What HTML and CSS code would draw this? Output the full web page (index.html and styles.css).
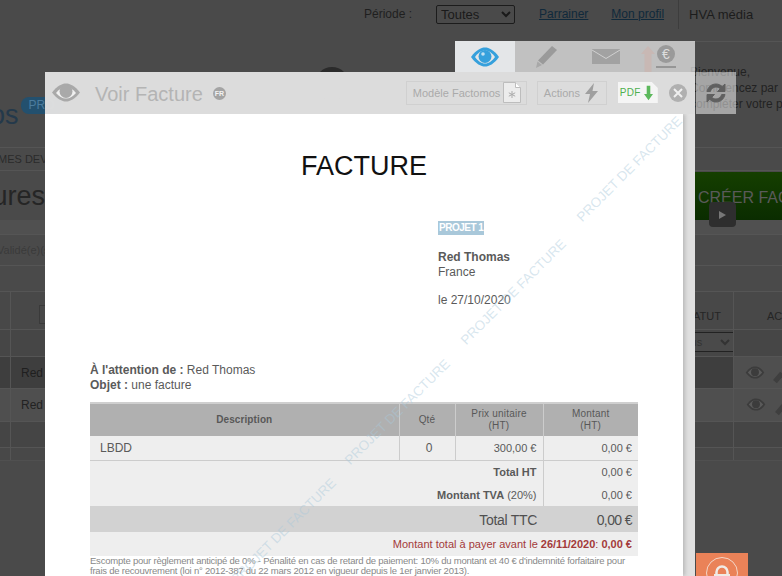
FILE: index.html
```html
<!DOCTYPE html>
<html lang="fr">
<head>
  <meta charset="UTF-8" />
  <title>Voir Facture</title>
  <link rel="stylesheet" href="styles.css">
</head>
<body>

  <!-- page behind the overlay -->
  <div class="page">
    <div class="topbar">
      <span class="period">Période :</span>
      <select class="period-select"><option>Toutes</option></select>
      <a class="toplink first" href="#">Parrainer</a>
      <a class="toplink" href="#">Mon profil</a>
      <span class="company">HVA média</span>
    </div>

    <div class="intro">
      <div class="logo"><span class="logo-name">Factomos</span><span class="logo-pro">PRO</span></div>
      <div class="avatar"></div>
      <div class="welcome">Bienvenue,<br>Commencez par<br>compléter votre profil</div>
    </div>

    <div class="nav">MES DEVIS</div>

    <div class="title-row">
      <span class="page-title">Factures</span>
      <div class="create-btn">CRÉER FACTURE</div>
    </div>

    <div class="filter-gap"></div>
    <div class="filter-line">Validé(e)(s)</div>
    <div class="filter-after"></div>

    <div class="bgrow bgrow-head">
      <div class="c-a"></div><div class="c-b"><span class="mini-input"></span></div>
      <div class="c-s">STATUT</div><div class="c-x">ACTIONS</div>
    </div>
    <div class="bgrow bgrow-filter">
      <div class="c-a"></div><div class="c-b"></div>
      <div class="c-s"><select class="statut-select"><option>Tous</option></select></div><div class="c-x"></div>
    </div>
    <div class="bgrow bgrow-one">
      <div class="c-a"></div><div class="c-b">Red Thomas</div>
      <div class="c-s"></div>
      <div class="c-x">
        <svg class="dim-eye" viewBox="0 0 28 18"><path d="M1 9C6 2 10 .5 14 .5S22 2 27 9c-5 7-9 8.500-13 8.500S6 16 1 9z" fill="#3c3c3c"/><path d="M4 9c3-4 6-6 10-6s7 2 10 6c-3 4-6 6-10 6S7 13 4 9z" fill="#5a5a5a"/><circle cx="14" cy="8.500" r="5.500" fill="#3c3c3c"/></svg>
        <span class="dim-pencil"></span>
      </div>
    </div>
    <div class="bgrow bgrow-two">
      <div class="c-a"></div><div class="c-b">Red Thomas</div>
      <div class="c-s"></div>
      <div class="c-x">
        <svg class="dim-eye" viewBox="0 0 28 18"><path d="M1 9C6 2 10 .5 14 .5S22 2 27 9c-5 7-9 8.500-13 8.500S6 16 1 9z" fill="#3c3c3c"/><path d="M4 9c3-4 6-6 10-6s7 2 10 6c-3 4-6 6-10 6S7 13 4 9z" fill="#5a5a5a"/><circle cx="14" cy="8.500" r="5.500" fill="#3c3c3c"/></svg>
        <span class="dim-pencil"></span>
      </div>
    </div>
    <div class="bgrow bgrow-foot"><div class="c-a"></div><div class="c-b"></div><div class="c-s"></div><div class="c-x"></div></div>
    <div class="bgrow bgrow-foot2"><div class="c-a"></div><div class="c-b"></div><div class="c-s"></div><div class="c-x"></div></div>
  </div>

  <div class="play"><span class="play-arrow"></span></div>

  <div class="lock">
    <svg viewBox="0 0 52 23" width="52" height="23">
      <circle cx="26" cy="20" r="15.500" fill="none" stroke="#f3d6c8" stroke-width="1"/>
      <path d="M20.500 23v-4a5.500 5.500 0 0 1 11 0v4" fill="none" stroke="#f0ebe6" stroke-width="2.500"/>
      <rect x="18" y="21" width="16" height="2" fill="#f0ebe6"/>
    </svg>
  </div>

  <!-- tabs above the modal -->
  <div class="tabs">
    <div class="tab tab-on">
      <svg width="28" height="20" viewBox="0 0 28 20"><path d="M0 10C5 3 10 .5 14 .5S23 3 28 10c-5 7-10 9.500-14 9.500S5 17 0 10z" fill="#35a0dc"/><path d="M4 10c3-4 6-6.500 10-6.500S21 6 24 10c-3 4-6 6.500-10 6.500S7 14 4 10z" fill="#e4e6e8"/><circle cx="14" cy="9.500" r="6.500" fill="#35a0dc"/><circle cx="12" cy="7" r="1.800" fill="#bfe0f3"/></svg>
    </div>
    <div class="tab">
      <svg width="21" height="22" viewBox="0 0 21 22"><path d="M16 0l5 4L7 18.500 2 14.500z" fill="#9a9a9a"/><path d="M1.500 15.500l4.500 3.500L0 22z" fill="#a8a8a8"/></svg>
    </div>
    <div class="tab">
      <svg width="28" height="15" viewBox="0 0 28 15"><rect width="28" height="15" fill="#a2a2a2"/><path d="M0 1l14 8.500L28 1" fill="none" stroke="#d0d0d0" stroke-width="1"/></svg>
    </div>
    <div class="tab tab-money">
      <svg class="up-arrow" width="14" height="26" viewBox="0 0 14 26"><path d="M7 0l7 8h-3.500v18h-7V8H0z" fill="#c8b8b4"/></svg>
      <div class="coin-wrap"><span class="coin">€</span><span class="coin-bar"></span></div>
    </div>
  </div>

  <div class="refresh">
    <svg width="22" height="22" viewBox="0 0 22 22"><path d="M2 9.500C3 5 6.500 2 11 2c2.500 0 4.600 1 6.200 2.600L20 2v7.500h-7.500l2.700-2.700C14 5.600 12.600 5 11 5 8.300 5 6.100 6.800 5.300 9.500z" fill="#606060" stroke="#606060"/><path d="M20 12.500C19 17 15.500 20 11 20c-2.500 0-4.600-1-6.200-2.600L2 20v-7.500h7.500l-2.700 2.700C8 16.400 9.400 17 11 17c2.700 0 4.900-1.800 5.700-4.500z" fill="#606060" stroke="#606060"/></svg>
  </div>

  <div class="modal">
    <div class="modal-head">
      <svg class="head-eye" width="28" height="19" viewBox="0 0 28 19"><path d="M0 9.500C5 3 10 .5 14 .5S23 3 28 9.500c-5 6.500-10 9-14 9S5 16 0 9.500z" fill="#a9a9a9"/><path d="M4 10c3-3.500 6-6 10-6s7 2.500 10 6c-3 3.500-6 5.500-10 5.500S7 13.500 4 10z" fill="#f0f0f0"/><circle cx="14" cy="8.500" r="6.500" fill="#a9a9a9"/></svg>
      <span class="head-title">Voir Facture</span>
      <span class="lang">FR</span>
      <div class="head-btn btn-model">Modèle Factomos
        <svg width="18" height="21" viewBox="0 0 18 21"><path d="M.5.5h12l5 5v15H.5z" fill="#ececec" stroke="#bdbdbd"/><path d="M12.500.5v5h5" fill="#fff" stroke="#bdbdbd"/><path d="M9 9v7M5.800 10.800l6.400 3.400M12.200 10.800l-6.400 3.400" stroke="#aaa" fill="none"/></svg>
      </div>
      <div class="head-btn btn-actions">Actions
        <svg width="13" height="20" viewBox="0 0 13 20"><path d="M9 0L0 11h5L3 20l10-12H7.500z" fill="#9f9f9f"/></svg>
      </div>
      <div class="pdf">PDF
        <svg width="9" height="16" viewBox="0 0 10 16"><path d="M3 0h4v9h3l-5 7-5-7h3z" fill="#5cb85c"/></svg>
      </div>
      <div class="close">
        <svg width="18" height="18" viewBox="0 0 18 18"><circle cx="9" cy="9" r="9" fill="#b0b0b0"/><path d="M5 5l8 8M13 5l-8 8" stroke="#efefef" stroke-width="2"/></svg>
      </div>
    </div>

    <div class="paper-wrap">
      <div class="paper">
        <h1>FACTURE</h1>

        <div class="client">
          <span class="project-tag">PROJET 1</span>
          <p class="client-name"><b>Red Thomas</b><br>France</p>
          <p class="client-date">le 27/10/2020</p>
        </div>

        <p class="subject"><b>À l'attention de :</b> Red Thomas<br><b>Objet :</b> une facture</p>

        <table class="invoice">
          <colgroup><col class="col-desc"><col class="col-qty"><col class="col-unit"><col class="col-total"></colgroup>
          <thead>
            <tr><th>Description</th><th>Qté</th><th>Prix unitaire<br><span>(HT)</span></th><th>Montant<br><span>(HT)</span></th></tr>
          </thead>
          <tbody>
            <tr class="line">
              <td class="desc">LBDD</td><td class="mid">0</td><td class="num">300,00 €</td><td class="num">0,00 €</td>
            </tr>
            <tr class="sum sum-first"><td colspan="3" class="num"><b>Total HT</b></td><td class="num">0,00 €</td></tr>
            <tr class="sum"><td colspan="3" class="num"><b>Montant TVA</b> (20%)</td><td class="num">0,00 €</td></tr>
            <tr class="ttc"><td colspan="3" class="num">Total TTC</td><td class="num">0,00 €</td></tr>
            <tr class="due"><td colspan="4">Montant total à payer avant le <b>26/11/2020</b>: <b>0,00 €</b></td></tr>
          </tbody>
        </table>

        <p class="legal">Escompte pour règlement anticipé de 0% - Pénalité en cas de retard de paiement: 10% du montant et 40 € d'indemnité forfaitaire pour frais de recouvrement (loi n° 2012-387 du 22 mars 2012 en vigueur depuis le 1er janvier 2013).</p>

        <span class="wm wm-1">PROJET DE FACTURE</span>
        <span class="wm wm-2">PROJET DE FACTURE</span>
        <span class="wm wm-3">PROJET DE FACTURE</span>
        <span class="wm wm-4">PROJET DE FACTURE</span>
      </div>
    </div>
  </div>

</body>
</html>
```

FILE: styles.css
```css
* { box-sizing: border-box; margin: 0; }

html, body { height: 576px; overflow: hidden; }

body {
  position: relative;
  background: #4a4a4a;
  font-family: "Liberation Sans", Arial, sans-serif;
  font-size: 12px;
  color: #222;
}

/* background page */
.page { width: 782px; height: 576px; overflow: hidden; }

.topbar {
  height: 41px;
  display: flex;
  align-items: flex-start;
  padding-top: 5px;
  padding-left: 364px;
}
.period { font-size: 12px; line-height: 18px; color: #1f1f1f; width: 72px; }
.period-select {
  width: 79px;
  height: 19px;
  font-family: inherit;
  font-size: 13px;
  background: #4a4a4a;
  color: #1a1a1a;
  border: 1px solid #1c1c1c;
  border-radius: 2px;
  padding: 0;
}
.toplink { font-size: 12px; line-height: 18px; color: #10293b; margin-left: 23px; }
.toplink.first { margin-left: 24px; }
.company {
  margin-left: 14px;
  padding-left: 10px;
  height: 29px;
  margin-top: -5px;
  line-height: 30px;
  border-left: 1px solid #3d3d3d;
  font-size: 13px;
  color: #1c1c1c;
  white-space: nowrap;
}

.intro { height: 106px; display: flex; }
.logo { width: 52px; margin-top: 60px; position: relative; display: flex; overflow: visible; }
.logo-name {
  margin-left: -100px;
  font-size: 27px;
  line-height: 28px;
  color: #24394b;
  white-space: nowrap;
}
.logo-pro {
  margin-left: 2px;
  height: 17px;
  padding: 0 8px;
  margin-top: -4px;
  border-radius: 8px;
  background: #23506e;
  color: #4b7c9e;
  font-size: 12px;
  line-height: 17px;
}
.avatar {
  width: 34px;
  height: 34px;
  margin-top: 26px;
  margin-left: 263px;
  border-radius: 50%;
  background: #2b2b2b;
}
.welcome {
  margin-left: auto;
  width: 92px;
  padding: 23px 0 0 0;
  line-height: 16px;
  white-space: nowrap;
  overflow: hidden;
  color: #222;
  font-size: 12px;
  box-shadow: inset 0 1px 0 #555;
}

.nav {
  height: 24px;
  border-top: 1px solid #555;
  border-bottom: 1px solid #555;
  line-height: 22px;
  text-indent: -2px;
  color: #2a2a2a;
  font-size: 11px;
  white-space: nowrap;
}

.title-row { height: 49px; display: flex; justify-content: space-between; align-items: center; }
.page-title { font-size: 27px; margin-left: -60px; color: #252525; white-space: nowrap; margin-top: 2px; }
.create-btn {
  width: 87px;
  height: 48px;
  margin-top: 1px;
  padding-left: 3px;
  background: linear-gradient(#153f00, #0a2c00);
  color: #5a5a5a;
  font-size: 16px;
  line-height: 52px;
  white-space: nowrap;
  overflow: hidden;
}

.filter-gap { height: 15px; border-bottom: 1px solid #555; background: #505050; }
.filter-line { height: 31px; border-bottom: 1px solid #555; font-size: 11px; line-height: 31px; text-indent: -3px; color: #3a3a3a; white-space: nowrap; }
.filter-after { height: 25px; }

.bgrow { display: flex; border-top: 1px solid #555; }
.c-a { width: 11px; border-right: 1px solid #555; flex: none; }
.c-b { flex: 1; padding-left: 10px; color: #1f1f1f; white-space: nowrap; }
.c-s { width: 39px; flex: none; white-space: nowrap; overflow: hidden; text-align: right; border-right: 1px solid #555; }
.c-x { width: 48px; flex: none; white-space: nowrap; overflow: hidden; color: #222; }

.bgrow-head { height: 38px; background: #484848; }
.bgrow-head .c-s, .bgrow-head .c-x { padding-top: 18px; color: #252525; font-size: 11px; }
.bgrow-head .c-s { padding-right: 12px; display: flex; justify-content: flex-end; }
.bgrow-head .c-x { padding-left: 33px; }
.mini-input { display: block; width: 30px; height: 19px; margin: 13px 0 0 18px; border: 1px solid #3a3a3a; }
.bgrow-filter { height: 27px; background: #464646; }
.statut-select {
  width: 60px;
  height: 20px;
  margin: 2px 0 0 -21px;
  display: block;
  background: #4a4a4a;
  border: 1px solid #222;
  color: #333;
  font-size: 11px;
}
.bgrow-one { height: 32px; background: #3e3e3e; }
.bgrow-one .c-b { padding-top: 9px; }
.bgrow-one .c-x { background: #4f4f4f; padding: 9px 0 0 11px; display: flex; gap: 11px; }
.bgrow-two { height: 33px; background: #4f4f4f; }
.bgrow-two .c-b { padding-top: 9px; color: #222; }
.bgrow-two .c-x { padding: 9px 0 0 12px; display: flex; gap: 12px; }
.dim-eye { width: 20px; height: 13px; flex: none; }
.dim-pencil { width: 5px; height: 11px; background: #3f3f3f; transform: rotate(40deg); flex: none; margin-top: 6px; }
.bgrow-foot { height: 26px; background: #454545; }
.bgrow-foot2 { height: 14px; background: #484848; border-bottom: 1px solid #505050; }

.play {
  position: absolute;
  left: 709px;
  top: 202px;
  width: 27px;
  height: 25px;
  border-radius: 4px;
  background: #2e2e2e;
  display: flex;
  align-items: center;
  justify-content: center;
}
.play-arrow {
  border-left: 7px solid #777;
  border-top: 4px solid transparent;
  border-bottom: 4px solid transparent;
}

.lock { position: absolute; left: 696px; top: 553px; width: 52px; height: 23px; background: #ea8258; }
.lock svg { display: block; }

/* modal */
.tabs {
  position: absolute;
  left: 455px;
  top: 41px;
  width: 240px;
  height: 31px;
  background: rgba(255, 255, 255, .66);
  display: flex;
}
.tab { display: flex; align-items: center; justify-content: center; width: 60px; }
.tab-on { background: #e4e6e8; }
.tab:nth-child(2) { width: 62px; }
.tab:nth-child(3) { width: 58px; }
.tab-money { width: 60px; align-items: flex-start; justify-content: flex-start; padding-left: 6px; padding-top: 4px; overflow: hidden; }
.up-arrow { margin-top: 1px; }
.coin-wrap { margin-left: 1px; display: flex; flex-direction: column; align-items: center; }
.coin {
  width: 18px;
  height: 18px;
  border-radius: 50%;
  background: #9a9a9a;
  color: #ddd;
  font-size: 14px;
  line-height: 18px;
  text-align: center;
}
.coin-bar { width: 20px; height: 2px; margin-top: 3px; background: #969696; }

.refresh {
  position: absolute;
  left: 696px;
  top: 72px;
  width: 40px;
  height: 42px;
  background: rgba(255, 255, 255, .5);
  display: flex;
  align-items: center;
  justify-content: center;
}

.modal { position: absolute; left: 45px; top: 72px; width: 650px; height: 504px; }

.modal-head {
  height: 42px;
  background: rgba(223, 223, 223, .98);
  display: flex;
  align-items: center;
  position: relative;
  padding-left: 7px;
}
.head-eye { flex: none; margin-top: -1px; }
.head-title { margin-left: 15px; font-size: 20px; color: #b4b4b4; white-space: nowrap; margin-top: 2px; }
.lang {
  margin-left: 10px;
  width: 13px;
  height: 13px;
  border-radius: 50%;
  background: #a4a4a4;
  color: #f2f2f2;
  font-size: 7px;
  font-weight: bold;
  line-height: 13px;
  text-align: center;
}
.head-btn {
  height: 24px;
  border: 1px solid #d0d0d0;
  display: flex;
  align-items: center;
  justify-content: space-between;
  padding: 0 5px 0 6px;
  font-size: 11px;
  color: #aaa;
  white-space: nowrap;
}
.btn-model { width: 121px; margin-left: 180px; margin-top: -1px; }
.btn-actions { width: 70px; margin-left: 10px; margin-top: -1px; }
.btn-actions svg { margin-right: 3px; }
.pdf {
  width: 40px;
  height: 21px;
  margin-left: 11px;
  margin-top: -1px;
  background: #f5f5f5;
  clip-path: polygon(0 0, 34px 0, 100% 6px, 100% 100%, 0 100%);
  color: #4fb04f;
  font-size: 10px;
  letter-spacing: .3px;
  display: flex;
  align-items: center;
  padding-left: 2px;
  gap: 3px;
}
.close { margin-left: 11px; margin-top: 0; line-height: 0; }

.paper-wrap { height: 462px; background: #e0e0e0; overflow: hidden; }
.paper {
  position: relative;
  width: 638px;
  height: 462px;
  background: #fff;
  box-shadow: 2px 0 4px #b8b8b8;
  padding: 37px 45px 0;
  color: #5a5a5a;
  overflow: hidden;
}

h1 {
  font-size: 27px;
  font-weight: normal;
  line-height: 30px;
  color: #111;
  text-align: center;
}

.client { margin: 40px 0 0 348px; line-height: 15px; height: 142px; }
.project-tag {
  display: inline-block;
  padding: 0 1px;
  height: 14px;
  background: #a9c8da;
  color: #fff;
  font-size: 10px;
  font-weight: bold;
  letter-spacing: -.5px;
  line-height: 14px;
  vertical-align: top;
}
.client-name { margin-top: 14px; }
.client-date { margin-top: 13px; }

.subject { margin-top: 0; line-height: 15px; }

.invoice {
  width: 548px;
  margin-top: 9px;
  border-collapse: collapse;
  table-layout: fixed;
  border-top: 2px solid #cfcfcf;
  background: #eee;
  font-size: 11px;
}
.col-desc { width: 309px; }
.col-qty { width: 56px; }
.col-unit { width: 88px; }
.col-total { width: 95px; }

.invoice th {
  height: 33px;
  padding: 0;
  background: #b0b0b0;
  border-left: 1px solid #ccc;
  font-size: 10px;
  line-height: 12px;
  color: #585858;
}
.invoice th:first-child { border-left: 0; letter-spacing: .1px; }
.invoice th span { font-weight: normal; }
.invoice th:nth-child(n+2) { font-weight: normal; letter-spacing: .2px; }
.invoice td { padding: 0 6px 0 10px; }

.line td { height: 24px; border-bottom: 1px solid #ccc; border-left: 1px solid #ccc; padding-top: 1px; }
.line td:first-child { border-left: 0; }
.desc { font-size: 12px; }
.mid { text-align: center; font-size: 12px; }
.num { text-align: right; }
.sum td { height: 23px; }
.sum + .sum td { padding-top: 1px; }
.sum td:last-child { border-left: 1px solid #ccc; }
.ttc td { height: 26px; padding-top: 1px; background: #d2d2d2; font-size: 14px; letter-spacing: -.3px; color: #505050; }
.ttc td:last-child { letter-spacing: -.6px; }
.due td { height: 24px; text-align: right; color: #a33a3a; font-size: 11px; }

.legal { margin-top: 0; font-size: 9.500px; letter-spacing: -.22px; line-height: 10px; color: #888; }

.wm {
  position: absolute;
  width: 146px;
  font-size: 13.500px;
  line-height: 16px;
  white-space: nowrap;
  color: rgba(169, 200, 218, .45);
  transform: rotate(-45deg);
  pointer-events: none;
}
.wm-1 { left: 513px; top: 46px; }
.wm-2 { left: 397px; top: 169px; }
.wm-3 { left: 281px; top: 289px; }
.wm-4 { left: 167px; top: 408px; }
```
